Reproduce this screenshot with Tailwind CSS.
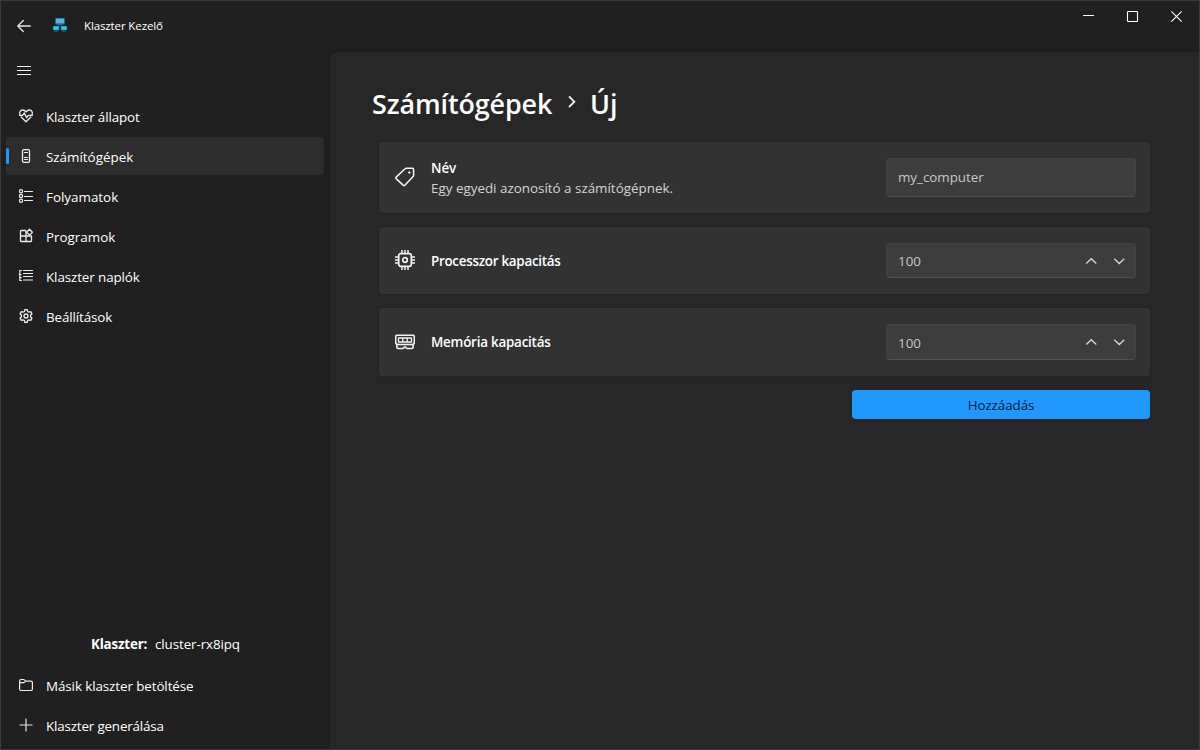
<!DOCTYPE html>
<html lang="hu">
<head>
<meta charset="utf-8">
<title>Klaszter Kezelő</title>
<script src="https://cdn.jsdelivr.net/npm/@tailwindcss/browser@4"></script>
</head>
<body class="w-[1200px] h-[750px] overflow-hidden">
<div class="w-[1200px] h-[750px] flex flex-col bg-[#202020] border border-[#3a3a3a] text-white text-[13.4px] leading-5 font-['Open_Sans','Noto_Sans',sans-serif] whitespace-nowrap">

  <header class="h-[50px] shrink-0 flex items-start">
    <svg class="ml-4 mt-[18px] w-[14px] h-[14px]" viewBox="0 0 14 14" fill="none" stroke="#e4e4e4" stroke-width="1.3" stroke-linecap="round" stroke-linejoin="round"><path d="M13.3 7H1M6.3 1.500L.8 7l5.500 5.500"/></svg>
    <svg class="ml-[21px] mt-4 w-4 h-4" viewBox="0 0 16 16"><path d="M8 7v3M3.500 9.500h9" stroke="#17405c" stroke-width="1"/><rect x="3.200" y="1" width="9.600" height="6.400" rx=".8" fill="#2478b4"/><rect x="4" y="1.800" width="8" height="4.400" fill="#58b4e8"/><path d="M5.500 7.800h5" stroke="#1d6fa8"/><rect x="1" y="9" width="6" height="4.300" rx=".6" fill="#18a6d0"/><rect x="2" y="9.800" width="4" height="2.500" fill="#25d0e4"/><rect x="9" y="9" width="6" height="4.300" rx=".6" fill="#18a6d0"/><rect x="10" y="9.800" width="4" height="2.500" fill="#25d0e4"/><path d="M2.600 14.200h2.800M10.600 14.200h2.800" stroke="#1d7aa8"/></svg>
    <div class="ml-4 mt-[15px] text-[11.5px] tracking-[-0.12px]">Klaszter Kezelő</div>
    <div class="ml-auto mt-[9px] mr-[15px] flex gap-[30px]">
      <svg class="w-[14px] h-[14px]" viewBox="0 0 14 14"><path d="M1 5.500h11" stroke="#fff"/></svg>
      <svg class="w-[14px] h-[14px]" viewBox="0 0 14 14"><rect x="1.500" y="1.500" width="10" height="10" rx=".8" fill="none" stroke="#fff" stroke-width="1.100"/></svg>
      <svg class="w-[14px] h-[14px]" viewBox="0 0 14 14"><path d="M1.300 1.300l10.400 10.400M11.700 1.300L1.300 11.700" stroke="#fff" stroke-width="1.100"/></svg>
    </div>
  </header>

  <div class="flex-1 flex min-h-0">
    <aside class="w-[328px] shrink-0 flex flex-col pl-[5px] pt-[14px] pb-1">
      <svg class="ml-[11px] mb-[19px] w-[14px] h-[13px] shrink-0" viewBox="0 0 14 13"><path d="M0 1.500h14M0 5.500h14M0 9.500h14" stroke="#fff"/></svg>
      <nav class="flex flex-col gap-[2px] w-[318px]">
        <a class="h-[38px] pl-3 flex items-center gap-3"><svg class="w-4 h-4 -mt-px" viewBox="0 0 16 16" fill="none" stroke="#eee" stroke-width="1.300" stroke-linejoin="round" stroke-linecap="round"><path d="M1.900 6.500C1 4 2.500 2 4.600 2 6.200 2 7.400 3 8 4c.6-1 1.800-2 3.400-2 2.100 0 3.600 2 2.700 4.500M3.200 9L8 13.800 12.800 9M1.500 7.300H4.600L6.300 5l2.300 4.600 1.700-2.300h4.200"/></svg><span class="mt-px tracking-[-0.12px]">Klaszter állapot</span></a>
        <a class="relative h-[38px] pl-3 flex items-center gap-3 rounded bg-[#2d2d2d]"><i class="absolute left-0 top-[11px] w-[3px] h-4 rounded-full bg-[#1f99ff]"></i><svg class="w-4 h-4 -mt-px" viewBox="0 0 16 16" fill="none" stroke="#eee" stroke-width="1.300"><rect x="4.500" y="1.600" width="7" height="12.800" rx="1.300"/><path d="M6 4.500h4M6 9.500h4M6 11.500h4" stroke-width="1"/></svg><span class="mt-px">Számítógépek</span></a>
        <a class="h-[38px] pl-3 flex items-center gap-3"><svg class="w-4 h-4 -mt-px" viewBox="0 0 16 16" fill="none" stroke="#eee" stroke-width="1.200" stroke-linecap="round"><circle cx="3" cy="3.200" r="1.600"/><circle cx="3" cy="8" r="1.600"/><circle cx="3" cy="12.800" r="1.600"/><path d="M6.500 3.500h8M6.500 8.500h8M6.500 12.500h8"/></svg><span class="mt-px">Folyamatok</span></a>
        <a class="h-[38px] pl-3 flex items-center gap-3"><svg class="w-4 h-4 -mt-px" viewBox="0 0 16 16" fill="none" stroke="#eee" stroke-width="1.300" stroke-linejoin="round"><path d="M8 2.500H3.200Q2.500 2.500 2.500 3.200v9.600q0 .7.700.7h9.600q.7 0 .7-.7V8H2.500M8 2.500v11"/><path d="M11.500 1.300l2.900 2.900-2.900 2.900-2.900-2.900z"/></svg><span class="mt-px">Programok</span></a>
        <a class="h-[38px] pl-3 flex items-center gap-3"><svg class="w-4 h-4 -mt-px" viewBox="0 0 16 16" fill="none" stroke="#eee" stroke-width="1.200" stroke-linecap="round" stroke-linejoin="round"><path d="M3.500 2.500h-1.700v3.300l-.5.500.5.500v5.700h1.700M1.800 6.500h1.400M1.800 9.700h1.400M5.500 2.500h9M5.500 5.500h9M5.500 8.500h9M5.500 12h9"/></svg><span class="mt-px tracking-[-0.1px]">Klaszter naplók</span></a>
        <a class="h-[38px] pl-3 flex items-center gap-3"><svg class="w-4 h-4 -mt-px" viewBox="0 0 16 16" fill="none" stroke="#eee" stroke-width="1.300" stroke-linejoin="round"><path d="M6.800 1.700h2.400l.4 1.800 1.300.7 1.800-.6 1.300 2.200-1.400 1.200v2l1.400 1.200-1.300 2.200-1.800-.6-1.300.7-.4 1.800H6.800l-.4-1.800-1.300-.7-1.800.6L2 10.200 3.400 9V7L2 5.800l1.300-2.200 1.800.6 1.300-.7z"/><circle cx="8" cy="8" r="2"/></svg><span class="mt-px tracking-[-0.12px]">Beállítások</span></a>
      </nav>

      <div class="mt-auto flex gap-2 pl-[85px] mb-3"><b class="font-bold w-[56px] tracking-[-0.18px]">Klaszter:</b><span class="tracking-[-0.1px]">cluster-rx8ipq</span></div>
      <div class="flex flex-col gap-[2px] mb-px">
        <a class="h-[38px] pl-3 flex items-center gap-3"><svg class="w-4 h-4 -mt-px" viewBox="0 0 16 16" fill="none" stroke="#eee" stroke-width="1.200" stroke-linejoin="round"><path d="M1.600 4q0-1.500 1.500-1.500h2.500q.5 0 .9.400l1.300 1.200h5q1.600 0 1.600 1.500v6.300q0 1.600-1.600 1.600H3.100q-1.500 0-1.500-1.500zM1.600 5.700h3.700q.6 0 1-.4l1.400-1.200"/></svg><span class="mt-px tracking-[-0.09px]">Másik klaszter betöltése</span></a>
        <a class="h-[38px] pl-3 flex items-center gap-3"><svg class="w-4 h-4 -mt-px" viewBox="0 0 16 16" stroke="#e6e6e6" stroke-width="1.200" stroke-linecap="round"><path d="M8 2v12M2 8h12"/></svg><span class="mt-px tracking-[-0.17px]">Klaszter generálása</span></a>
      </div>
    </aside>

    <main class="flex-1 bg-[#272727] border-l border-t border-[#1d1d1d] rounded-tl-lg pl-12 pr-12 pt-[33px]">
      <h1 class="-ml-[6px] h-[38px] flex items-center text-[26.9px] font-semibold"><span class="w-[180px] tracking-[-0.1px]">Számítógépek</span><svg class="ml-[13px] mr-[11px] -mt-1 w-[14px] h-[14px]" viewBox="0 0 14 14" fill="none" stroke="#eee" stroke-width="1.900"><path d="M4 1.300l5.300 5.400L4 12.200"/></svg><span>Új</span></h1>

      <section class="mt-[18px] flex flex-col gap-[12px]">
        <div class="h-[73px] flex items-center rounded bg-[#323232] border border-[#232323] pl-4 pr-[14px]">
          <svg class="w-5 h-5 -mt-[2px] shrink-0" viewBox="0 0 20 20" fill="none" stroke="#f2f2f2" stroke-width="1.500" stroke-linejoin="round"><path d="M11.300 1.200h6q1.300 0 1.300 1.300v5.800q0 .7-.5 1.200l-8 8.600q-1 1-2 0L1.400 11.900q-1-1 0-2l8.700-8.200q.5-.5 1.200-.5z"/><circle cx="14.300" cy="5.500" r=".8" fill="#f2f2f2" stroke-width="1"/></svg>
          <div class="ml-4"><div class="font-semibold tracking-[-0.05px]">Név</div><div class="text-[#d4d4d4]">Egy egyedi azonosító a számítógépnek.</div></div>
          <div class="ml-auto w-[250px] h-[39px] flex items-center pl-[11px] rounded bg-[#3d3d3d] border border-[#434343] border-b-[#505050] text-[#c6c6c6] tracking-[-0.03px]"><span class="-mt-px">my_computer</span></div>
        </div>
        <div class="h-[69px] flex items-center rounded bg-[#323232] border border-[#232323] pl-4 pr-[14px]">
          <svg class="w-5 h-5 -mt-px shrink-0" viewBox="0 0 20 20" fill="none" stroke="#f2f2f2" stroke-width="1.700"><rect x="3.700" y="3.700" width="12.600" height="12.600" rx="2"/><circle cx="10" cy="10" r="2.300"/><path d="M7 0v3.500M10 0v3.500M13 0v3.500M7 16.500V20M10 16.500V20M13 16.500V20M0 7h3.500M0 10h3.500M0 13h3.500M16.500 7H20M16.500 10H20M16.500 13H20" stroke-width="1.500"/></svg>
          <div class="ml-4 mt-px font-semibold tracking-[-0.27px]">Processzor kapacitás</div>
          <div class="ml-auto w-[250px] h-[35px] flex items-center pl-[11px] rounded bg-[#3d3d3d] border border-[#434343] border-b-[#505050] text-[#c6c6c6]"><span class="mt-px">100</span><svg class="ml-auto mr-[10px] w-[40px] h-3" viewBox="0 0 40 12" fill="none" stroke="#d6d6d6" stroke-width="1.300"><path d="M1.300 8.500l5-4.800 5 4.800M29.300 3.700l5 4.800 5-4.800"/></svg></div>
        </div>
        <div class="h-[70px] flex items-center rounded bg-[#323232] border border-[#232323] pl-4 pr-[14px]">
          <svg class="w-5 h-5 shrink-0" viewBox="0 0 20 20" fill="none" stroke="#f2f2f2" stroke-width="1.600" stroke-linejoin="round"><path d="M2.200 3.200h15.600q1.500 0 1.500 1.500v5.800q0 1.500-1.100 1.500v3q0 1.500-1.500 1.500h-4.400q-.8 0-1.200-.7l-.5-.8h-1.200l-.5.800q-.4.700-1.200.7H3.300q-1.500 0-1.500-1.500v-3Q.7 12 .7 10.500V4.700q0-1.500 1.500-1.500z"/><path d="M1.800 12.500h16.400"/><path d="M3.500 6h13v4h-13zM7.800 6v4M12.200 6v4" stroke-width="1.300"/></svg>
          <div class="ml-4 font-semibold tracking-[-0.22px]">Memória kapacitás</div>
          <div class="ml-auto w-[250px] h-9 flex items-center pl-[11px] rounded bg-[#3d3d3d] border border-[#434343] border-b-[#505050] text-[#c6c6c6]"><span class="mt-[2px]">100</span><svg class="ml-auto mr-[10px] w-[40px] h-3" viewBox="0 0 40 12" fill="none" stroke="#d6d6d6" stroke-width="1.300"><path d="M1.300 8.500l5-4.800 5 4.800M29.300 3.700l5 4.800 5-4.800"/></svg></div>
        </div>
        <button class="self-end mt-px mr-px w-[298px] h-[29px] rounded bg-[#1f99ff] text-[#061a2b] tracking-[-0.07px]">Hozzáadás</button>
      </section>
    </main>
  </div>
</div>
</body>
</html>
